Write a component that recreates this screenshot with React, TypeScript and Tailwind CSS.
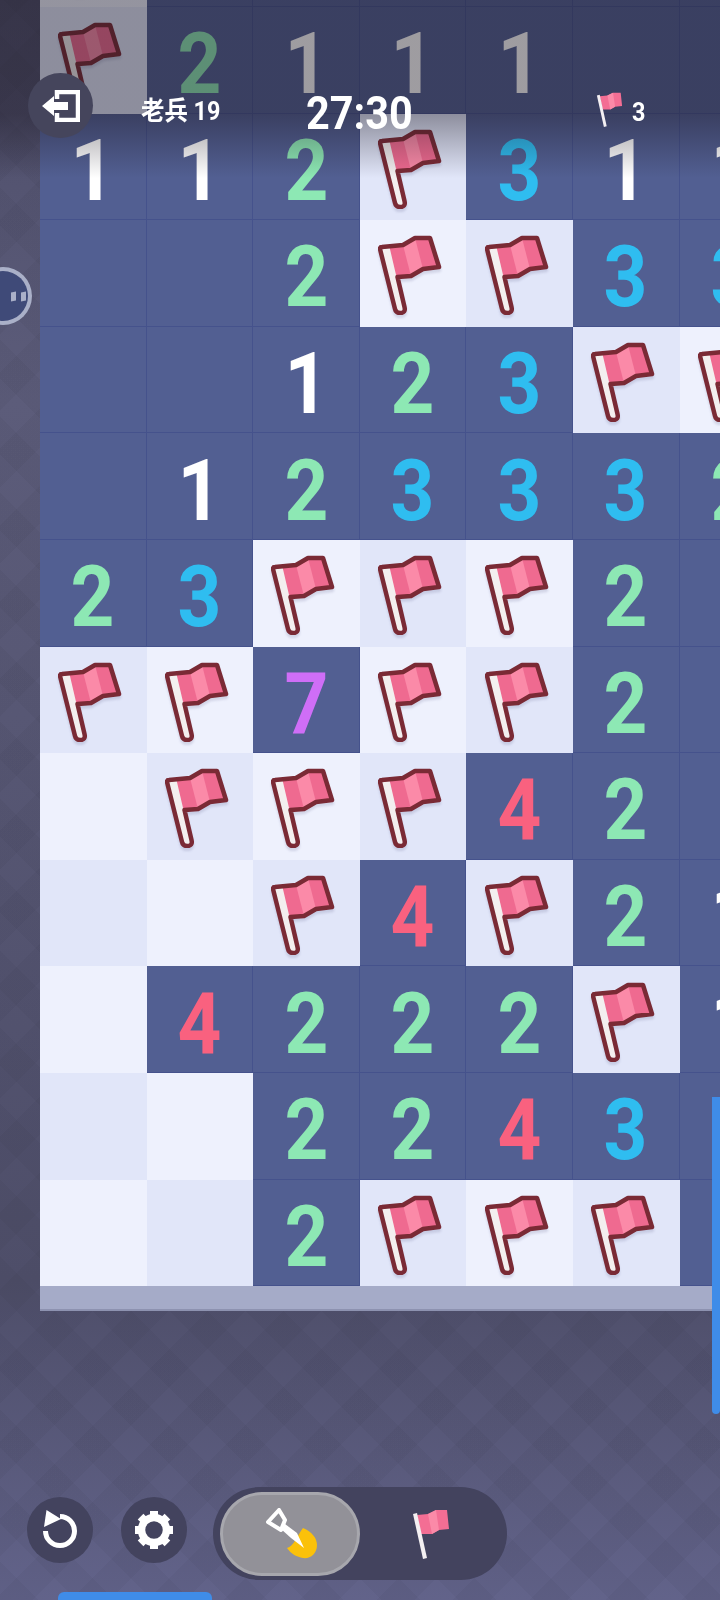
const rows = [
  "F......",
  "F2111..",
  "112F311",
  "..2FF33",
  "..123FF",
  ".123332",
  "23FFF2.",
  "FF7FF2.",
  "LFFF42.",
  "LLF4F21",
  "L4222F1",
  "LL2243.",
  "LL2FFF.",
];

const digitColor: Record<string, string> = {
  "1": "text-white",
  "2": "text-[#8de8b4]",
  "3": "text-[#2fbdf0]",
  "4": "text-[#f9617f]",
  "7": "text-[#cf6ef7]",
};

function Flag() {
  return (
    <svg viewBox="0 0 64 80" className="w-[64px] h-[80px] -translate-x-[3px] translate-y-[2px] drop-shadow-[0_3px_1px_rgba(70,70,120,0.16)]">
      <path d="M4 12 L25 10 L37 3 L52 3 L61 32 L45 34 L33 41 L16 42 Z" fill="#ef6a90" />
      <path d="M25 10 L37 3 L45 34 L33 41 Z" fill="#fb8aa8" />
      <path d="M3 13 L11.5 12 L25.5 72 Q27 78 22 78 Q18 78 17 74 Z" fill="#f3efef" />
      <path
        d="M2 14 Q2 12 4 12 L25 10 L37 3 L52 3 L61 32 L45 34 L33 41 L19.5 42 L26.5 72 Q28 78 22 78 Q18 78 17 74 Z"
        fill="none"
        stroke="#7a2a35"
        strokeWidth="4.5"
        strokeLinejoin="round"
      />
    </svg>
  );
}

function SmallFlag({ className }: { className: string }) {
  return (
    <svg viewBox="0 0 38 50" className={className}>
      <path d="M5 6 L16 5 L24 1 L35 1 L37 20 L27 21 L20 25 L9 25 Z" fill="#f36e94" />
      <path d="M16 5 L24 1 L27 21 L20 25 Z" fill="#fb8aa8" />
      <path d="M1 5 L5 4 L15 49 L11 50 Z" fill="#f4f0f2" />
    </svg>
  );
}

function Cell({ value, r, c }: { value: string; r: number; c: number }) {
  const darker = (r + c) % 2 === 0;
  if (value === "F" || value === "L") {
    return (
      <div className={`flex items-center justify-center ${darker ? "bg-[#e1e6f9]" : "bg-[#eef1fd]"}`}>
        {value === "F" && <Flag />}
      </div>
    );
  }
  return (
    <div className="flex items-center justify-center border-r border-b border-[#45528c] bg-[#525f92]">
      {value !== "." && (
        <span className={`translate-y-[5px] scale-x-90 font-bold text-[85px] leading-none ${digitColor[value]}`}>{value}</span>
      )}
    </div>
  );
}

function IconCircle({ children }: { children: React.ReactNode }) {
  return <div className="flex items-center justify-center w-[66px] h-[66px] rounded-full bg-[#43435e]">{children}</div>;
}

export default function App() {
  return (
    <div className="relative flex flex-col w-[720px] h-[1600px] overflow-hidden bg-[#55567a] font-['Roboto','Noto_Sans_CJK_SC',sans-serif]">
      <div className="absolute inset-0 bg-[linear-gradient(180deg,#4d4d69_0%,#5c5c7a_25%,#4e4e69_80%,#62638a_100%)]" />
      <div className="absolute inset-0 bg-[repeating-linear-gradient(45deg,rgba(0,0,0,0.03)_0_27px,transparent_27px_54px),repeating-linear-gradient(-45deg,rgba(0,0,0,0.03)_0_27px,transparent_27px_54px)]" />

      {/* Board */}
      <div className="relative ml-[40px] mt-[-99.6px]">
        <div className="grid grid-cols-[repeat(7,106.6px)] auto-rows-[106.6px]">
          {rows.map((row, r) =>
            row.split("").map((value, c) => <Cell key={`${r}-${c}`} value={value} r={r - 1} c={c} />)
          )}
        </div>
        <div className="h-[25px] bg-[#a5abc8] border-b-2 border-[#8d92b0]" />
      </div>

      {/* Toolbar */}
      <div className="relative flex items-start gap-[28px] ml-[27px] mt-[176px]">
        <div className="flex gap-[28px] mt-[10px]">
          <IconCircle>
            <svg viewBox="0 0 40 40" className="w-[40px] h-[40px]" fill="none">
              <path d="M20 6.5 A14.5 14.5 0 1 1 5.5 21" stroke="#fff" strokeWidth="5" />
              <path d="M6.5 0 L21 9 L4 17 Z" fill="#fff" />
            </svg>
          </IconCircle>
          <IconCircle>
            <svg viewBox="0 0 40 40" className="w-[40px] h-[40px]" fill="none">
              <circle cx="20" cy="20" r="12.5" stroke="#fff" strokeWidth="7.5" />
              {[0, 45, 90, 135, 180, 225, 270, 315].map((a) => (
                <rect key={a} x="16" y="1" width="8" height="7" fill="#fff" transform={`rotate(${a} 20 20)`} />
              ))}
            </svg>
          </IconCircle>
        </div>
        <div className="flex items-center w-[294px] h-[93px] -ml-[2px] pl-[7px] rounded-full bg-[#43435e]">
          <div className="flex items-center justify-center w-[140px] h-[84px] rounded-full bg-[#929198] border-[3px] border-[#a7a7ad]">
            <svg viewBox="0 0 52 52" className="w-[52px] h-[52px] translate-x-[2px]">
              <path d="M37 20 C46 24 51 30 51 37 C51 46 44 51 37 50 C31 49 25 46 21 40 C28 38 31 28 37 20 Z" fill="#fbc10a" />
              <path d="M13 2 L2 14 L15 22 L19 12 Z" fill="#8f8f96" stroke="#fff" strokeWidth="4" strokeLinejoin="round" />
              <path d="M15 21 L25 30 L38 40 L31 25 L19 16 Z" fill="#fff" />
            </svg>
          </div>
          <SmallFlag className="w-[38px] h-[50px] ml-[52px]" />
        </div>
      </div>

      {/* Top HUD */}
      <div className="absolute top-0 left-0 w-full h-[178px] bg-[linear-gradient(180deg,rgba(25,20,30,0.42)_0%,rgba(25,20,30,0.42)_64%,rgba(25,20,30,0)_100%)]" />
      <div className="absolute top-[73px] left-[28px] flex items-center justify-center w-[65px] h-[65px] rounded-full bg-[#45455c]">
        <svg viewBox="0 0 38 32" className="w-[38px] h-[32px]" fill="none">
          <path d="M15 9 V2 H36 V30 H15 V23" stroke="#fff" strokeWidth="4.5" />
          <path d="M0 16 L12 6 V12 H26 V20 H12 V26 Z" fill="#fff" />
        </svg>
      </div>
      <div className="absolute top-[93px] left-[141px] text-white font-bold text-[26px] leading-[36px] scale-x-90 origin-left whitespace-nowrap">老兵 19</div>
      <div className="absolute top-[87px] left-[306px] text-white font-bold text-[46px] leading-[52px] scale-x-90 origin-left">27:30</div>
      <SmallFlag className="absolute top-[92px] left-[596px] w-[27px] h-[35px]" />
      <div className="absolute top-[97px] left-[632px] text-white font-bold text-[26px] leading-[30px] scale-x-90 origin-left">3</div>

      {/* Side helper */}
      <div className="absolute top-[267px] left-[-26px] flex items-center justify-center w-[58px] h-[58px] rounded-full bg-[#aab0c8]">
        <div className="flex items-center justify-center gap-[5px] w-[50px] h-[50px] pl-[30px] rounded-full bg-[#3f4a78]">
          <span className="shrink-0 w-[5px] h-[9px] -skew-y-12 bg-[#aab0c8]" />
          <span className="shrink-0 w-[5px] h-[9px] -skew-y-12 bg-[#aab0c8]" />
        </div>
      </div>

      {/* Scroll bars */}
      <div className="absolute top-[1097px] right-0 w-[8px] h-[317px] rounded-b-md bg-[#3f8ce8]" />
      <div className="absolute bottom-0 left-[58px] w-[154px] h-[8px] rounded-t-md bg-[#3f8ce8]" />
    </div>
  );
}
